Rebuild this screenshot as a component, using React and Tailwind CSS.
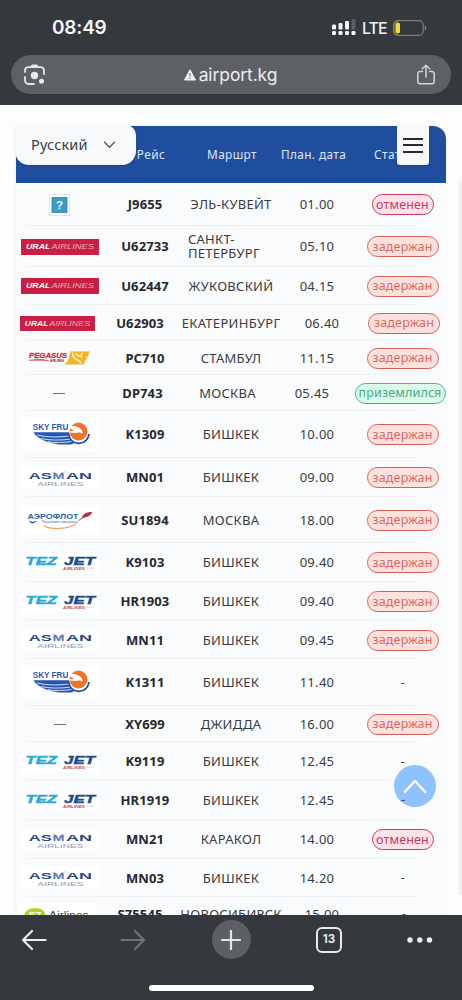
import React from "react";

const SANS = "font-['Noto_Sans','Liberation_Sans',sans-serif]";

function Ural({ narrow }) {
  return (
    <svg width={narrow ? 75 : 78} height={narrow ? 15 : 16} viewBox="0 0 78 16" preserveAspectRatio="none">
      <rect width="78" height="16" fill="#c91f45" />
      <g fontFamily="Liberation Sans, sans-serif" fontStyle="italic" fontSize="6.8" fill="#fff">
        <text x="5" y="10.4" fontWeight="700" textLength="24.500" lengthAdjust="spacingAndGlyphs">URAL</text>
        <text x="30.5" y="10.4" fill="#f0a9b9" textLength="42.5" lengthAdjust="spacingAndGlyphs">AIRLINES</text>
      </g>
    </svg>
  );
}

function Pegasus() {
  return (
    <svg width="78" height="20" viewBox="0 0 78 20">
      <path d="M49.500 3.500H69L62.500 16.500H42.500c4.500-1.500 5.500-6.500 7-13z" fill="#f0b429" />
      <path d="M51.500 4.800c0 4 2 6.500 5.500 7.500 1.500.4 3 2 1.800 3.500M55 5.500c.5 2 2.500 3 5 2.200M61.500 5c-1.500 1.500-2 3.500-.5 5" fill="none" stroke="#fff3d0" strokeWidth="1.400" />
      <text x="8" y="10.300" fontFamily="Liberation Sans, sans-serif" fontSize="7.500" fontWeight="700" fontStyle="italic" fill="#c92f38" stroke="#c92f38" strokeWidth=".3" textLength="38" lengthAdjust="spacingAndGlyphs">PEGASUS</text>
      <path d="M8 12.300c8-1.300 15-.9 20 .2-7-.3-13-.2-20-.2z" fill="#cf2434" stroke="#cf2434" strokeWidth=".4" />
      <text x="29" y="14.400" fontFamily="Liberation Sans, sans-serif" fontSize="3.600" fontWeight="700" fill="#6b3038" textLength="14" lengthAdjust="spacingAndGlyphs">AIRLINES</text>
    </svg>
  );
}

function SkyFru() {
  return (
    <svg width="78" height="31" viewBox="0 0 78 31">
      <rect width="78" height="31" fill="#fff" />
      <path d="M12.500 13.200h35.500c.5 4.500 2.500 8 6 10.500l-4 1.800H38C28 24 16 20 12.500 13.200z" fill="#2457b4" />
      <path d="M16 16c9 2.200 20 2.600 32 1M20 19.500c9 1.900 19 2.100 29.500.6M27 22.700c7 1.300 15 1 24-.2" fill="none" stroke="#fff" strokeWidth=".8" />
      <path d="M47.500 15c.8 6 5 9.300 10.500 9.300 5.500 0 9.500-4 10-9.300" fill="none" stroke="#254f9f" strokeWidth="1.800" />
      <circle cx="57.500" cy="12.500" r="9" fill="#ee7228" />
      <path d="M48 7.500c5-1.200 10 0 12.500 3.300.9 1.300 1.300 2.700.9 4-1.500-1.300-3.400-1.400-5.300-1-3 .6-6.300.4-8.100-1.300 2-.2 3.800-.4 5-1.200-2-.4-3.700-1.600-5-3.800z" fill="#fff" />
      <text x="11.800" y="11.300" fontFamily="Liberation Sans, sans-serif" fontSize="8.800" fontWeight="700" fill="#2b59ac" textLength="35.500" lengthAdjust="spacingAndGlyphs">SKY FRU</text>
    </svg>
  );
}

function Asman() {
  return (
    <svg width="78" height="22" viewBox="0 0 78 22">
      <rect width="78" height="22" fill="#fff" />
      <g fontFamily="Liberation Sans, sans-serif">
        <text x="7.800" y="12" fontSize="8.800" fontWeight="700" fill="#2b4585" textLength="23" lengthAdjust="spacingAndGlyphs">AS</text>
        <text x="31.500" y="12" fontSize="8.800" fontWeight="700" fill="#5f74ab" textLength="12" lengthAdjust="spacingAndGlyphs">M</text>
        <text x="45" y="12" fontSize="8.800" fontWeight="700" fill="#2b4585" textLength="26" lengthAdjust="spacingAndGlyphs">AN</text>
        <text x="16.500" y="18.600" fontSize="4.800" fill="#8f98b8" textLength="46" lengthAdjust="spacingAndGlyphs">AIRLINES</text>
      </g>
      <path d="M31 5c2.500 0 4.500 1.300 6.500 3.500C39.300 6.300 41.500 5 44.500 4.800" fill="none" stroke="#93a4cc" strokeWidth=".6" />
    </svg>
  );
}

function Aeroflot() {
  return (
    <svg width="78" height="28" viewBox="0 0 78 28">
      <rect width="78" height="28" fill="#fff" />
      <text x="6.500" y="12.700" fontFamily="Liberation Sans, sans-serif" fontSize="7.800" fontWeight="700" fill="#2462a4" textLength="51" lengthAdjust="spacingAndGlyphs">АЭРОФЛОТ</text>
      <path d="M60.500 11.500c1.500-3.500 4.500-5.500 11-5.500-2 4-5.500 5.700-11 5.500z" fill="#bf3547" />
      <path d="M57.500 14.500l12-7.500" stroke="#7a2f55" strokeWidth=".8" />
      <path d="M8 15.300l3.500.7 4-.7-3 1.800h-2z" fill="#2b64a4" stroke="#2b64a4" strokeWidth=".5" />
      <text x="21" y="17.300" fontFamily="Liberation Sans, sans-serif" fontSize="3.700" fontStyle="italic" fill="#2462a4" textLength="36" lengthAdjust="spacingAndGlyphs">Российские авиалинии</text>
      <path d="M23 20c8 4 24 3.200 32-2.200" fill="none" stroke="#eda75a" strokeWidth="1.200" />
    </svg>
  );
}

function TezJet() {
  return (
    <svg width="78" height="20" viewBox="0 0 78 20">
      <rect width="78" height="20" fill="#fff" />
      <g fontFamily="Liberation Sans, sans-serif" fontStyle="italic" fontWeight="700">
        <text x="4.500" y="11.700" fontSize="10" fill="#29a9d8" stroke="#29a9d8" strokeWidth=".4" textLength="31.500" lengthAdjust="spacingAndGlyphs">TEZ</text>
        <text x="43" y="11.700" fontSize="10" fill="#214d8c" stroke="#214d8c" strokeWidth=".4" textLength="31" lengthAdjust="spacingAndGlyphs">JET</text>
        <text x="42" y="16.500" fontSize="3.800" fill="#d24551" textLength="22" lengthAdjust="spacingAndGlyphs">AIRLINES</text>
      </g>
      <path d="M65.500 15.200H73" stroke="#cdd1d8" strokeWidth="1.200" strokeDasharray="1.500 .8" />
    </svg>
  );
}

function Broken() {
  return (
    <svg width="22" height="22" viewBox="0 0 22 22">
      <rect x=".5" y=".5" width="20" height="21" fill="#fff" stroke="#dce6ee" />
      <rect x="3" y="3.500" width="15" height="15" fill="#3b9cc6" stroke="#2f7fa8" strokeWidth=".8" />
      <text x="10.500" y="15.200" textAnchor="middle" fontFamily="Liberation Sans, sans-serif" fontSize="11.500" fontWeight="700" fill="#e9f8ff">?</text>
    </svg>
  );
}

function S7() {
  return (
    <svg width="78" height="22" viewBox="0 0 78 22">
      <rect width="78" height="22" fill="#fff" />
      <ellipse cx="17" cy="12" rx="10.500" ry="7" fill="#b4cf2a" />
      <text x="10.500" y="15.200" fontFamily="Liberation Sans, sans-serif" fontSize="9" fontWeight="700" fill="#fff" textLength="13" lengthAdjust="spacingAndGlyphs">S7</text>
      <text x="31" y="15.800" fontFamily="Liberation Sans, sans-serif" fontSize="10" fill="#45484c" textLength="39.500" lengthAdjust="spacingAndGlyphs">Airlines</text>
    </svg>
  );
}

const NoLogo = () => <span className="block h-px w-[12px] bg-[#6f7377]" />;
const UralNarrow = () => <Ural narrow />;

const NORMAL = "grid-cols-[88px_82px_90px_82px_89px]";
const WIDE = "grid-cols-[83px_82px_100px_82px_82px]";
const LANDED = "grid-cols-[86px_81px_89px_80px_96px]";

const FLIGHTS = [
  { logo: Broken, no: "J9655", to: "ЭЛЬ-КУВЕЙТ", time: "01.00", status: "отменен", h: "h-[43px]" },
  { logo: Ural, no: "U62733", to: "САНКТ-ПЕТЕРБУРГ", time: "05.10", status: "задержан", h: "h-[41px]" },
  { logo: Ural, no: "U62447", to: "ЖУКОВСКИЙ", time: "04.15", status: "задержан", h: "h-[38px]" },
  { logo: UralNarrow, no: "U62903", to: "ЕКАТЕРИНБУРГ", time: "06.40", status: "задержан", h: "h-[36px]", cols: WIDE },
  { logo: Pegasus, no: "PC710", to: "СТАМБУЛ", time: "11.15", status: "задержан", h: "h-[34px]" },
  { logo: NoLogo, no: "DP743", to: "МОСКВА", time: "05.45", status: "приземлился", h: "h-[36px]", cols: LANDED },
  { logo: SkyFru, no: "K1309", to: "БИШКЕК", time: "10.00", status: "задержан", h: "h-[47px]" },
  { logo: Asman, no: "MN01", to: "БИШКЕК", time: "09.00", status: "задержан", h: "h-[39px]" },
  { logo: Aeroflot, no: "SU1894", to: "МОСКВА", time: "18.00", status: "задержан", h: "h-[46px]" },
  { logo: TezJet, no: "K9103", to: "БИШКЕК", time: "09.40", status: "задержан", h: "h-[39px]" },
  { logo: TezJet, no: "HR1903", to: "БИШКЕК", time: "09.40", status: "задержан", h: "h-[39px]" },
  { logo: Asman, no: "MN11", to: "БИШКЕК", time: "09.45", status: "задержан", h: "h-[38px]" },
  { logo: SkyFru, no: "K1311", to: "БИШКЕК", time: "11.40", status: "-", h: "h-[47px]" },
  { logo: NoLogo, no: "XY699", to: "ДЖИДДА", time: "16.00", status: "задержан", h: "h-[36px]" },
  { logo: TezJet, no: "K9119", to: "БИШКЕК", time: "12.45", status: "-", h: "h-[39px]" },
  { logo: TezJet, no: "HR1919", to: "БИШКЕК", time: "12.45", status: "-", h: "h-[39px]" },
  { logo: Asman, no: "MN21", to: "КАРАКОЛ", time: "14.00", status: "отменен", h: "h-[39px]" },
  { logo: Asman, no: "MN03", to: "БИШКЕК", time: "14.20", status: "-", h: "h-[38px]" },
  { logo: S7, no: "S75545", to: "НОВОСИБИРСК", time: "15.00", status: "-", h: "h-[34px]", cols: WIDE },
];

const BADGES = {
  "отменен": "w-[62px] border-[#c43b60] bg-[#fde3e9] text-[#c23a62]",
  "задержан": "w-[72px] border-[#d4605c] bg-[#fee1dd] text-[#d66a62]",
  "приземлился": "w-[91px] border-[#4fb389] bg-[#dcfaea] text-[#4aaa83]",
};

function Status({ value }) {
  if (!BADGES[value]) return <span className="text-[13px] text-[#44484d]">{value}</span>;
  return (
    <span className={`flex h-[21px] shrink-0 items-center justify-center rounded-full border-[1.5px] text-[12.5px] leading-[18px] whitespace-nowrap tracking-[0.15px] ${BADGES[value]}`}>
      {value}
    </span>
  );
}

function Row({ f }) {
  const Logo = f.logo;
  const twoLines = f.no === "U62733";
  return (
    <div className={`relative grid shrink-0 items-center justify-items-center ${f.cols || NORMAL} ${f.h}`}>
      <div className="pr-px"><Logo /></div>
      <div className="pb-px text-[13px] leading-[18px] font-bold whitespace-nowrap tracking-[0.1px] text-[#26292e]">{f.no}</div>
      {twoLines ? (
        <div className="w-full pb-px pl-[2px] text-[13px] leading-[14px] tracking-[0.25px] text-[#383b40]">САНКТ-<br />ПЕТЕРБУРГ</div>
      ) : (
        <div className="pb-px text-[13px] leading-[18px] whitespace-nowrap tracking-[0.3px] text-[#383b40]">{f.to}</div>
      )}
      <div className="pb-px text-[13px] leading-[18px] tracking-[0.3px] text-[#383b40]">{f.time}</div>
      <Status value={f.status} />
      <div className="absolute right-[30px] bottom-0 left-[11px] h-px bg-[#f0f1f3]" />
    </div>
  );
}

export default function App() {
  return (
    <div className={`flex h-[1000px] w-[462px] flex-col overflow-hidden bg-[#35383c] ${SANS}`}>
      <header className="h-[105px] shrink-0">
        <div className="flex h-[55px] items-center justify-between pr-[35px] pl-[52px]">
          <span className="pt-px font-['Inter',sans-serif] text-[19px] font-semibold tracking-[-0.2px] text-[#f5f6f7]">08:49</span>
          <div className="flex items-center">
            <svg width="25" height="17" viewBox="0 0 25 17" fill="#f3f4f5">
              <rect x="0" y="5.500" width="4" height="5" rx="1.200" /><rect x="6.500" y="4" width="4" height="6.500" rx="1.200" />
              <rect x="13" y="2" width="4" height="8.500" rx="1.200" /><rect x="19.500" y="0" width="4" height="10.500" rx="1.200" fill="#5b5e62" />
              <rect x="0" y="12" width="4" height="4" rx="1.200" /><rect x="6.500" y="12" width="4" height="4" rx="1.200" />
              <rect x="13" y="12" width="4" height="4" rx="1.200" /><rect x="19.500" y="12" width="4" height="4" rx="1.200" />
            </svg>
            <span className="ml-[5px] w-[31px] pt-px font-['Inter',sans-serif] text-[16px] font-medium tracking-[-1px] text-[#f1f2f3]">LTE</span>
            <svg width="34" height="16" viewBox="0 0 34 16">
              <rect x=".7" y=".7" width="29.500" height="14.600" rx="4.500" fill="none" stroke="#7b7e80" strokeWidth="1.200" />
              <path d="M5 .8A4.300 4.300 0 0 0 .8 5v6A4.300 4.300 0 0 0 5 15.200" fill="none" stroke="#94873c" strokeWidth="1.200" />
              <rect x="2.500" y="2.500" width="4.500" height="11" rx="2" fill="#f3df32" />
              <path d="M31.800 5.500c2 .8 2 4.200 0 5z" fill="#85888b" />
            </svg>
          </div>
        </div>
        <div className="mx-[11px] flex h-[39px] items-center justify-between rounded-full bg-[#5d6064] pr-[15px] pl-[13px]">
          <svg width="21" height="21" viewBox="0 0 21 21" fill="none" stroke="#e4e6e8" strokeWidth="1.800" strokeLinecap="round">
            <path d="M1 8V6.500a3.500 3.500 0 0 1 3.500-3.300h12A3.500 3.500 0 0 1 20 6.500V10M1 13v3.500A3.500 3.500 0 0 0 4.500 20H10" />
            <path d="M6.500 3.200L8 1h5l1.500 2.200z" fill="#e4e6e8" stroke="#e4e6e8" strokeWidth="1" />
            <circle cx="10.500" cy="11.500" r="3.700" fill="#e9eaec" stroke="none" /><circle cx="17.500" cy="17.300" r="2.500" fill="#e9eaec" stroke="none" />
          </svg>
          <div className="flex items-center gap-[3px]">
            <svg width="12" height="12" viewBox="0 0 12 12">
              <path d="M6 .8L11.500 11H.5z" fill="#f1f2f3" stroke="#f1f2f3" strokeLinejoin="round" />
              <path d="M6 4.300v3.200M6 8.700v1.200" stroke="#5d6064" strokeWidth="1.100" />
            </svg>
            <span className="font-['Inter',sans-serif] text-[17.5px] leading-[22px] tracking-[-0.1px] text-[#edeef0]">airport.kg</span>
          </div>
          <svg width="20" height="21" viewBox="0 0 20 21" fill="none" stroke="#d4d6d9" strokeWidth="1.500" strokeLinecap="round" strokeLinejoin="round">
            <path d="M6.500 7.500H4a2.200 2.200 0 0 0-2.200 2.200v7.800A2.200 2.200 0 0 0 4 19.700h12a2.200 2.200 0 0 0 2.200-2.200V9.700A2.200 2.200 0 0 0 16 7.500h-2.500M10 13V1.200M6.300 4.700L10 1.200l3.700 3.500" />
          </svg>
        </div>
      </header>

      <main className="relative h-[810px] shrink-0 overflow-hidden bg-[#fdfdfe] pt-[21px] pl-4">
        <section className="w-[430px] rounded-tr-[13px] bg-[#fafbfc] shadow-[0_0_3px_rgba(0,0,0,0.07)]">
          <div className={`grid h-[57px] ${NORMAL} items-center justify-items-center rounded-tr-[13px] bg-[#204e9e] text-[11.8px] tracking-[0.4px] whitespace-nowrap text-[#dce6f8]`}>
            <span />
            <span className="pl-[12px]">Рейс</span>
            <span className="pl-[2px]">Маршрт</span>
            <span className="pr-[7px]">План. дата</span>
            <span className="pr-[18px]">Статус</span>
          </div>
          {FLIGHTS.map((f, i) => <Row key={i} f={f} />)}
        </section>

        <div className="absolute top-[20px] left-[15px] flex h-[40px] w-[121px] items-center justify-between rounded-tr-[10px] rounded-b-[14px] bg-[#f8f9fb] pr-[20px] pl-[16px] shadow-[0_1px_2px_rgba(0,0,0,0.12)]">
          <span className="text-[14.5px] tracking-[0.15px] text-[#3c4046]">Русский</span>
          <svg width="13" height="8" viewBox="0 0 13 8" fill="none" stroke="#50545a" strokeWidth="1.300" strokeLinecap="round" strokeLinejoin="round"><path d="M1.500 1.300l5 5 5-5" /></svg>
        </div>
        <button aria-label="Меню" className="absolute top-[20px] left-[397px] flex h-[40px] w-[32px] flex-col items-center justify-center gap-[4.500px] rounded-b-[3px] bg-[#f8f9fa] shadow-[0_1px_2px_rgba(0,0,0,0.15)]">
          <span className="h-[2px] w-[20px] bg-[#292b2e]" />
          <span className="h-[2px] w-[20px] bg-[#292b2e]" />
          <span className="h-[2px] w-[20px] bg-[#292b2e]" />
        </button>
        <button aria-label="Наверх" className="absolute top-[660px] left-[394px] flex size-[42px] items-center justify-center rounded-full bg-[#8fc1fc]">
          <svg width="24" height="15" viewBox="0 0 24 15" fill="none" stroke="#fff" strokeWidth="2.200" strokeLinecap="round" strokeLinejoin="round"><path d="M1.700 13L12 2l10.300 11" /></svg>
          <span className="absolute top-[35px] left-[7px] h-px w-[4px] bg-[#3d5b83]" />
        </button>
        <div className="absolute top-[76px] right-0 h-[714px] w-[3px] bg-[#f0f0f3]" />
      </main>

      <footer className="flex h-[85px] shrink-0 flex-col items-center">
        <nav className="grid h-[49px] w-full grid-cols-[68px_130px_66px_130px_52px] items-center justify-items-center">
          <svg width="26" height="22" viewBox="0 0 26 22" fill="none" stroke="#eef0f1" strokeWidth="2.200" strokeLinecap="round" strokeLinejoin="round"><path d="M24.500 11H2M11 2L2 11l9 9" /></svg>
          <svg width="26" height="22" viewBox="0 0 26 22" fill="none" stroke="#6f7276" strokeWidth="2.200" strokeLinecap="round" strokeLinejoin="round"><path d="M1.500 11H24M15 2l9 9-9 9" /></svg>
          <span className="flex size-[39px] items-center justify-center rounded-full bg-[#5c5f63]">
            <svg width="20" height="20" viewBox="0 0 20 20" stroke="#e2e4e6" strokeWidth="2.200" strokeLinecap="round"><path d="M10 1v18M1 10h18" /></svg>
          </span>
          <span className="flex size-[26px] items-center justify-center rounded-[6px] border-2 border-[#e6e8ea] font-['Inter',sans-serif] text-[11.5px] font-bold text-[#e6e8ea]">13</span>
          <svg width="26" height="6" viewBox="0 0 26 6" fill="#eef0f1"><circle cx="3" cy="3" r="2.700" /><circle cx="12.800" cy="3" r="2.700" /><circle cx="22.500" cy="3" r="2.700" /></svg>
        </nav>
        <div className="mt-[21px] h-[6px] w-[165px] rounded-full bg-white" />
      </footer>
    </div>
  );
}
